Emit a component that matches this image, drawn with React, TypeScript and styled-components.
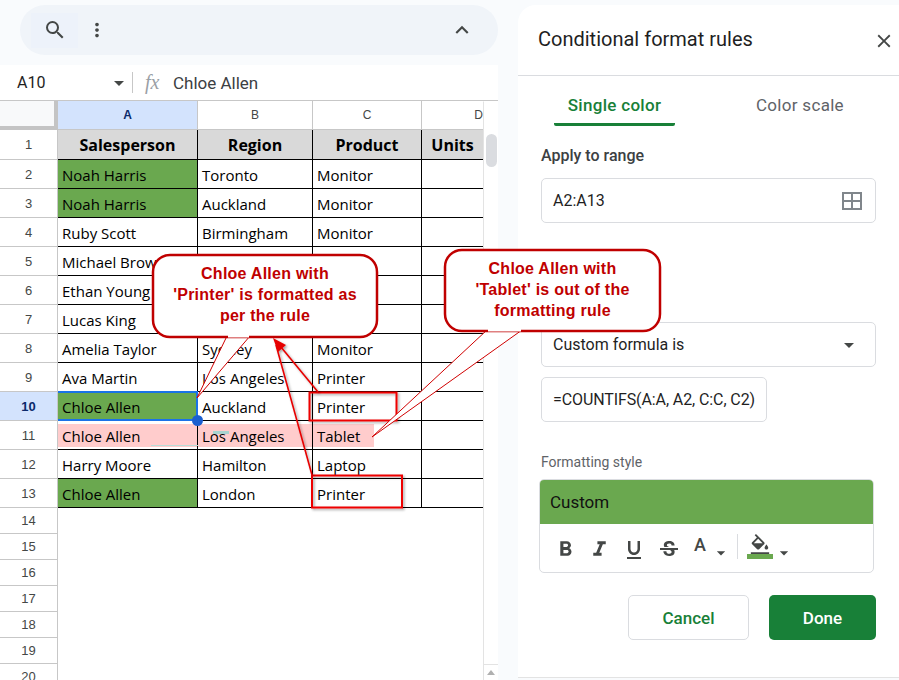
import React from 'react';
import styled, { createGlobalStyle } from 'styled-components';
import {
  MdSearch,
  MdMoreVert,
  MdKeyboardArrowUp,
  MdClose,
  MdArrowDropDown,
  MdFormatBold,
  MdFormatItalic,
  MdFormatUnderlined,
  MdStrikethroughS,
  MdFormatColorFill,
} from 'react-icons/md';

const GREEN = '#6aa84f';
const CELL_FONT = '"Open Sans", "Noto Sans", sans-serif';
const UI_FONT = 'Roboto, "Liberation Sans", sans-serif';

const GlobalStyle = createGlobalStyle`
  html, body { margin: 0; padding: 0; background: #f9fbfd; }
  * { box-sizing: border-box; }
`;

const Page = styled.div`
  position: relative;
  width: 899px;
  height: 680px;
  overflow: hidden;
  display: flex;
  background: #f9fbfd;
  font-family: ${UI_FONT};
`;

const SheetColumn = styled.div`
  width: 498px;
  flex: none;
  display: flex;
  flex-direction: column;
`;

const TopPill = styled.div`
  margin: 5px 0 10px 20px;
  height: 50px;
  border-radius: 25px;
  background: #f0f4f9;
  display: flex;
  align-items: center;
  padding: 0 23px 0 11px;
  color: #444746;
`;

const SearchBtn = styled.div`
  width: 47px;
  height: 35px;
  background: #edf2fa;
  display: flex;
  align-items: center;
  justify-content: center;
`;

const MoreBtn = styled.div`
  width: 38px;
  display: flex;
  align-items: center;
  justify-content: center;
`;

const Spacer = styled.div`
  flex: 1;
`;

const FormulaBar = styled.div`
  height: 36px;
  background: #fff;
  display: flex;
  align-items: center;
  border-bottom: 1px solid #c7c7c7;
  color: #1f1f1f;
`;

const NameBox = styled.div`
  width: 132px;
  padding-left: 17px;
  display: flex;
  align-items: center;
  justify-content: space-between;
  padding-right: 1px;
  font-size: 16px;
  color: #1f1f1f;
  svg { color: #444746; }
`;

const BarDivider = styled.div`
  width: 1px;
  height: 21px;
  background: #c7c7c7;
`;

const FxMark = styled.span`
  margin-left: 12px;
  width: 28px;
  font-family: "Liberation Serif", serif;
  font-style: italic;
  font-size: 20px;
  color: #9aa0a6;
`;

const FormulaText = styled.span`
  font-size: 17px;
  color: #3c4043;
`;

const GridArea = styled.div`
  flex: 1;
  display: flex;
  min-height: 0;
  background: #fff;
`;

const Cells = styled.div`
  width: 483px;
  flex: none;
`;

const ScrollTrack = styled.div`
  flex: 1;
  position: relative;
  background: #fff;
  border-left: 1px solid #e3e3e3;
  padding: 2px 1px 0 2px;
  border-top: 1px solid #fff;
`;

const ScrollThumb = styled.div`
  height: 33px;
  margin-top: 30px;
  border-radius: 6px;
  background: #dadce0;
`;

const ScrollArrow = styled.div`
  position: absolute;
  left: 0;
  right: 0;
  bottom: 0;
  height: 16px;
  border-top: 1px solid #e3e3e3;
  display: flex;
  align-items: center;
  justify-content: center;
  &::after {
    content: '';
    border-left: 4px solid transparent;
    border-right: 4px solid transparent;
    border-bottom: 5px solid #b0b0b0;
  }
`;

const GridRow = styled.div<{ $h: number }>`
  display: grid;
  grid-template-columns: 58px 140px 115px 109px 61px;
  height: ${p => p.$h}px;
`;

const Corner = styled.div`
  background: #f8f9fa;
  border-right: 4px solid #c4c4c4;
  border-bottom: 4px solid #c4c4c4;
`;

const ColHead = styled.div<{ $active?: boolean }>`
  display: flex;
  align-items: center;
  justify-content: center;
  overflow: hidden;
  font-family: "Liberation Sans", sans-serif;
  font-size: 12px;
  font-weight: ${p => (p.$active ? 700 : 400)};
  color: ${p => (p.$active ? '#0b2a6b' : '#444746')};
  background: ${p => (p.$active ? '#d3e3fd' : '#fff')};
  border-right: 1px solid #c7c7c7;
  border-bottom: 1px solid #c7c7c7;
`;

const ClippedHead = styled(ColHead)`
  justify-content: flex-end;
  border-right: none;
`;

const RowHead = styled.div<{ $active?: boolean }>`
  display: flex;
  align-items: center;
  justify-content: center;
  padding-left: 0;
  font-family: "Liberation Sans", sans-serif;
  font-size: 13px;
  font-weight: ${p => (p.$active ? 700 : 400)};
  color: ${p => (p.$active ? '#0b2a6b' : '#444746')};
  background: ${p => (p.$active ? '#d3e3fd' : '#fff')};
  border-right: 1px solid #c7c7c7;
  border-bottom: 1px solid #c7c7c7;
`;

const Cell = styled.div<{ $bg?: string; $bold?: boolean; $end?: boolean }>`
  position: relative;
  display: flex;
  align-items: center;
  justify-content: ${p => (p.$bold ? 'center' : 'flex-start')};
  padding: ${p => (p.$bold ? '0' : '2px 0 0 4px')};
  overflow: hidden;
  white-space: nowrap;
  font-family: ${CELL_FONT};
  font-size: ${p => (p.$bold ? 16 : 15)}px;
  font-weight: ${p => (p.$bold ? 700 : 400)};
  color: #000;
  background: ${p => p.$bg || '#fff'};
  border-bottom: 1px solid #000;
  border-right: ${p => (p.$end ? 'none' : '1px solid #000')};
`;

const Pink = styled.span<{ $w: number }>`
  position: absolute;
  left: 0;
  top: 3px;
  height: 23px;
  width: ${p => p.$w}px;
  background: #ffcccc;
`;

const CellText = styled.span`
  position: relative;
`;

const SelectedCell = styled(Cell)`
  overflow: visible;
  &::after {
    content: '';
    position: absolute;
    left: 0;
    right: -1px;
    top: -1px;
    bottom: -1px;
    border: 2px solid #1a73e8;
    border-left: none;
  }
`;

const Handle = styled.span`
  position: absolute;
  right: -6px;
  bottom: -6px;
  width: 11px;
  height: 11px;
  border-radius: 50%;
  background: #1a5fd0;
  z-index: 2;
`;

const Panel = styled.aside`
  position: absolute;
  left: 518px;
  top: 5px;
  width: 381px;
  height: 673px;
  background: #fff;
  border-top-left-radius: 18px;
  border-bottom: 1px solid #e3e3e3;
  display: flex;
  flex-direction: column;
`;

const PanelHead = styled.div`
  height: 71px;
  flex: none;
  border-bottom: 1px solid #dadce0;
  display: flex;
  align-items: center;
  justify-content: space-between;
  padding: 0 4px 2px 20px;
  font-size: 20px;
  color: #1f1f1f;
  svg { color: #444746; margin-top: 3px; }
`;

const Tabs = styled.div`
  display: flex;
  margin: 0 0 0 36px;
  height: 50px;
`;

const Tab = styled.div<{ $on?: boolean }>`
  width: ${p => (p.$on ? 121 : 'auto')}px;
  margin-left: ${p => (p.$on ? 0 : 81)}px;
  height: 50px;
  text-align: center;
  padding-top: 19px;
  font-size: 17px;
  letter-spacing: 0.3px;
  font-weight: ${p => (p.$on ? 500 : 400)};
  color: ${p => (p.$on ? '#188038' : '#5f6368')};
  border-bottom: ${p => (p.$on ? '3px solid #188038' : 'none')};
  border-radius: 0 0 2px 2px;
`;

const PanelBody = styled.div`
  padding: 0 23px 0 23px;
  display: flex;
  flex-direction: column;
`;

const SectionLabel = styled.div`
  margin-top: 20px;
  font-size: 16px;
  font-weight: 500;
  color: #3c4043;
  height: 19px;
`;

const Field = styled.div<{ $w?: number }>`
  height: 45px;
  width: ${p => (p.$w ? `${p.$w}px` : '100%')};
  border: 1px solid #dadce0;
  border-radius: 5px;
  display: flex;
  align-items: center;
  justify-content: space-between;
  font-size: 16px;
  color: #1f1f1f;
  padding: 0 8px 0 11px;
  overflow: hidden;
  white-space: nowrap;
  svg { flex: none; }
`;

const RangeField = styled(Field)`
  margin-top: 13px;
  padding-right: 13px;
`;

const SelectField = styled(Field)`
  margin-top: 99px;
  padding-right: 14px;
  svg { color: #444746; }
`;

const FormulaField = styled(Field)`
  margin-top: 10px;
  justify-content: flex-start;
  padding-right: 10px;
  letter-spacing: -0.1px;
`;

const FormulaClip = styled.span`
  display: block;
  overflow: hidden;
`;

const StyleLabel = styled.div`
  margin-top: 32px;
  font-size: 14px;
  color: #5f6368;
  height: 17px;
`;

const StyleBox = styled.div`
  margin: 8px 2px 0 -2px;
  height: 94px;
  border: 1px solid #dadce0;
  border-radius: 5px;
  overflow: hidden;
`;

const StylePreview = styled.div`
  height: 44px;
  background: ${GREEN};
  display: flex;
  align-items: center;
  padding-left: 10px;
  font-size: 17px;
  color: #111;
`;

const StyleTools = styled.div`
  height: 49px;
  display: flex;
  align-items: center;
  padding-left: 8px;
  color: #444746;
`;

const ToolBtn = styled.div`
  width: 34.5px;
  display: flex;
  justify-content: center;
  margin-top: 2px;
`;

const ColorMark = styled.span`
  width: 20px;
  font-size: 18px;
  font-weight: 500;
  text-align: center;
  margin: -8px 0 0 4px;
`;

const Caret = styled.span`
  width: 22px;
  display: flex;
  justify-content: center;
  margin-top: 8px;
  color: #444746;
`;

const ToolDivider = styled.span`
  width: 1px;
  height: 25px;
  background: #dadce0;
  margin: -4px 0 0 5px;
`;

const FillTool = styled.div`
  margin-left: 9px;
  width: 26px;
  display: flex;
  flex-direction: column;
  align-items: center;
  margin-top: -4px;
  svg { margin-bottom: -2px; }
`;

const FillBar = styled.span`
  width: 26px;
  height: 5px;
  background: ${GREEN};
`;

const Actions = styled.div`
  margin-top: 22px;
  display: flex;
  justify-content: flex-end;
  gap: 20px;
`;

const ActionBtn = styled.button<{ $primary?: boolean }>`
  height: 45px;
  width: ${p => (p.$primary ? 107 : 121)}px;
  border-radius: 5px;
  font-family: ${UI_FONT};
  font-size: 17px;
  font-weight: 500;
  color: ${p => (p.$primary ? '#fff' : '#188038')};
  background: ${p => (p.$primary ? '#188038' : '#fff')};
  border: ${p => (p.$primary ? 'none' : '1px solid #dadce0')};
`;

const Annotations = styled.svg`
  position: absolute;
  left: 0;
  top: 0;
  width: 899px;
  height: 680px;
  pointer-events: none;
`;

const CalloutText = styled.div<{ $x: number; $y: number; $w: number; $lh: number }>`
  position: absolute;
  left: ${p => p.$x}px;
  top: ${p => p.$y}px;
  width: ${p => p.$w}px;
  text-align: center;
  font-family: "Liberation Sans", Arial, sans-serif;
  font-size: 16px;
  font-weight: 700;
  letter-spacing: 0.25px;
  line-height: ${p => p.$lh}px;
  color: #c00000;
`;

const rows: [string, string, string, string?][] = [
  ['Noah Harris', 'Toronto', 'Monitor', GREEN],
  ['Noah Harris', 'Auckland', 'Monitor', GREEN],
  ['Ruby Scott', 'Birmingham', 'Monitor'],
  ['Michael Brown', 'Sydney', 'Laptop'],
  ['Ethan Young', 'London', 'Tablet'],
  ['Lucas King', 'Toronto', 'Laptop'],
  ['Amelia Taylor', 'Sydney', 'Monitor'],
  ['Ava Martin', 'Los Angeles', 'Printer'],
  ['Chloe Allen', 'Auckland', 'Printer', GREEN],
  ['Chloe Allen', 'Los Angeles', 'Tablet'],
  ['Harry Moore', 'Hamilton', 'Laptop'],
  ['Chloe Allen', 'London', 'Printer', GREEN],
];

const emptyRows = [14, 15, 16, 17, 18, 19, 20];

function RangeIcon() {
  return (
    <svg width="20" height="20" viewBox="0 0 20 20" fill="none" stroke="#80868b" strokeWidth="2">
      <rect x="1" y="2" width="18" height="16" />
      <path d="M10 2v16M1 10h18" />
    </svg>
  );
}

export default function App() {
  return (
    <Page>
      <GlobalStyle />
      <SheetColumn>
        <TopPill>
          <SearchBtn><MdSearch size={24} /></SearchBtn>
          <MoreBtn><MdMoreVert size={22} /></MoreBtn>
          <Spacer />
          <MdKeyboardArrowUp size={26} />
        </TopPill>
        <FormulaBar>
          <NameBox>A10<MdArrowDropDown size={24} /></NameBox>
          <BarDivider />
          <FxMark>fx</FxMark>
          <FormulaText>Chloe Allen</FormulaText>
        </FormulaBar>
        <GridArea>
          <Cells>
            <GridRow $h={29}>
              <Corner />
              <ColHead $active>A</ColHead>
              <ColHead>B</ColHead>
              <ColHead>C</ColHead>
              <ClippedHead>D</ClippedHead>
            </GridRow>
            <GridRow $h={30}>
              <RowHead>1</RowHead>
              <Cell $bg="#d9d9d9" $bold>Salesperson</Cell>
              <Cell $bg="#d9d9d9" $bold>Region</Cell>
              <Cell $bg="#d9d9d9" $bold>Product</Cell>
              <Cell $bg="#d9d9d9" $bold $end>Units</Cell>
            </GridRow>
            {rows.map((r, i) => {
              const num = i + 2;
              const pink = num === 11;
              const NameCell = num === 10 ? SelectedCell : Cell;
              return (
                <GridRow $h={29} key={num}>
                  <RowHead $active={num === 10}>{num}</RowHead>
                  <NameCell $bg={r[3]}>
                    {pink && <Pink $w={140} />}
                    <CellText>{r[0]}</CellText>
                    {num === 10 && <Handle />}
                  </NameCell>
                  <Cell>
                    {pink && <Pink $w={115} />}
                    <CellText>{r[1]}</CellText>
                  </Cell>
                  <Cell>
                    {pink && <Pink $w={61} />}
                    <CellText>{r[2]}</CellText>
                  </Cell>
                  <Cell $end />
                </GridRow>
              );
            })}
            {emptyRows.map(n => (
              <GridRow $h={26} key={n}>
                <RowHead>{n}</RowHead>
              </GridRow>
            ))}
          </Cells>
          <ScrollTrack>
            <ScrollThumb />
            <ScrollArrow />
          </ScrollTrack>
        </GridArea>
      </SheetColumn>

      <Panel>
        <PanelHead>
          Conditional format rules
          <MdClose size={22} />
        </PanelHead>
        <Tabs>
          <Tab $on>Single color</Tab>
          <Tab>Color scale</Tab>
        </Tabs>
        <PanelBody>
          <SectionLabel>Apply to range</SectionLabel>
          <RangeField>A2:A13<RangeIcon /></RangeField>
          <SelectField>Custom formula is<MdArrowDropDown size={24} /></SelectField>
          <FormulaField $w={226}><FormulaClip>=COUNTIFS(A:A, A2, C:C, C2)</FormulaClip></FormulaField>
          <StyleLabel>Formatting style</StyleLabel>
          <StyleBox>
            <StylePreview>Custom</StylePreview>
            <StyleTools>
              <ToolBtn><MdFormatBold size={25} /></ToolBtn>
              <ToolBtn><MdFormatItalic size={25} /></ToolBtn>
              <ToolBtn><MdFormatUnderlined size={24} /></ToolBtn>
              <ToolBtn><MdStrikethroughS size={24} /></ToolBtn>
              <ColorMark>A</ColorMark>
              <Caret><MdArrowDropDown size={20} /></Caret>
              <ToolDivider />
              <FillTool>
                <MdFormatColorFill size={22} />
                <FillBar />
              </FillTool>
              <Caret><MdArrowDropDown size={20} /></Caret>
            </StyleTools>
          </StyleBox>
          <Actions>
            <ActionBtn>Cancel</ActionBtn>
            <ActionBtn $primary>Done</ActionBtn>
          </Actions>
        </PanelBody>
      </Panel>

      <Annotations viewBox="0 0 899 680">
        <defs>
          <filter id="soft" x="-20%" y="-20%" width="150%" height="150%">
            <feDropShadow dx="1.5" dy="1.5" stdDeviation="1" floodColor="#000" floodOpacity="0.35" />
          </filter>
        </defs>
        <rect x="151" y="431" width="47" height="1" fill="none" />
        <rect x="151" y="445" width="47" height="1" fill="#b7dcd8" />
        <rect x="213" y="431" width="16" height="3" fill="#a8d4d0" />
        <g fill="none" stroke="#ee0000" strokeWidth="2" filter="url(#soft)">
          <rect x="309.5" y="392.5" width="87" height="28" />
          <rect x="312" y="475.5" width="90" height="32" />
        </g>
        <g stroke="#e60000" strokeWidth="1.6" fill="#e60000" filter="url(#soft)">
          <path d="M318 392L276 341" />
          <path d="M312 475L276 345" />
          <path d="M273 338l13 7-8 7z" stroke="none" />
        </g>
        <path d="M227 336L197 398L250 336Z" fill="#fff" stroke="#d00000" strokeWidth="1" />
        <rect x="153" y="255" width="224" height="82" rx="17" fill="#fff" stroke="#c00000" strokeWidth="2.5" />
        <path d="M228 336H249" stroke="#fff" strokeWidth="3" />
        <path d="M487 330L372 437L522 330Z" fill="#fff" stroke="#d00000" strokeWidth="1" />
        <rect x="445" y="250" width="215" height="81" rx="17" fill="#fff" stroke="#c00000" strokeWidth="2.5" />
        <path d="M488 330H521" stroke="#fff" strokeWidth="3" />
      </Annotations>
      <CalloutText $x={153} $y={263} $w={224} $lh={21}>
        Chloe Allen with<br />'Printer' is formatted as<br />per the rule
      </CalloutText>
      <CalloutText $x={445} $y={258} $w={215} $lh={21}>
        Chloe Allen with<br />'Tablet' is out of the<br />formatting rule
      </CalloutText>
    </Page>
  );
}
